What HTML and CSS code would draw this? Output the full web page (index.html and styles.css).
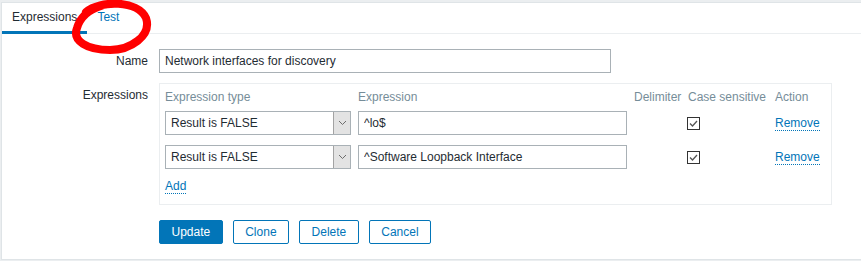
FILE: index.html
```html
<!DOCTYPE html>
<html lang="en">

<head>
    <meta charset="UTF-8">
    <title>Regular expression</title>
    <link rel="stylesheet" href="styles.css">
</head>

<body>

    <div class="panel">
        <div class="tabs">
            <span class="tab active">Expressions</span>
            <span class="tab">Test</span>
        </div>

        <div class="form">
            <div class="form-row">
                <label class="label" for="regexp-name">Name</label>
                <input type="text" id="regexp-name" class="textbox name-box" value="Network interfaces for discovery">
            </div>

            <div class="form-row expressions-row">
                <div class="label">Expressions</div>
                <div class="expr-box">
                    <div class="expr-grid expr-head">
                        <span>Expression type</span>
                        <span>Expression</span>
                        <span>Delimiter</span>
                        <span>Case sensitive</span>
                        <span>Action</span>
                    </div>

                    <div class="expr-grid expr-row">
                        <div class="select">
                            <span class="select-text">Result is FALSE</span>
                            <span class="select-btn">
                                <svg width="9" height="6" viewBox="0 0 9 6"><polyline points="1,1 4.5,4.5 8,1" fill="none" stroke="#6d6d6d" stroke-width="1"/></svg>
                            </span>
                        </div>
                        <input type="text" class="textbox expr-input" value="^lo$">
                        <span></span>
                        <span class="checkbox">
                            <svg width="11" height="11" viewBox="0 0 11 11"><polyline points="2,5.5 4.5,8 9,3" fill="none" stroke="#555" stroke-width="1.3"/></svg>
                        </span>
                        <a class="link" href="#">Remove</a>
                    </div>

                    <div class="expr-grid expr-row">
                        <div class="select">
                            <span class="select-text">Result is FALSE</span>
                            <span class="select-btn">
                                <svg width="9" height="6" viewBox="0 0 9 6"><polyline points="1,1 4.5,4.5 8,1" fill="none" stroke="#6d6d6d" stroke-width="1"/></svg>
                            </span>
                        </div>
                        <input type="text" class="textbox expr-input" value="^Software Loopback Interface">
                        <span></span>
                        <span class="checkbox">
                            <svg width="11" height="11" viewBox="0 0 11 11"><polyline points="2,5.5 4.5,8 9,3" fill="none" stroke="#555" stroke-width="1.3"/></svg>
                        </span>
                        <a class="link" href="#">Remove</a>
                    </div>

                    <div class="add-row">
                        <a class="link" href="#">Add</a>
                    </div>
                </div>
            </div>

            <div class="buttons">
                <button class="btn primary">Update</button>
                <button class="btn">Clone</button>
                <button class="btn">Delete</button>
                <button class="btn">Cancel</button>
            </div>
        </div>
    </div>

    <!-- hand drawn marker round the Test tab -->
    <svg class="marker" width="861" height="60" viewBox="0 0 861 60">
        <path d="M86 12 C100 0, 138 0, 146 18 C152 36, 130 50, 110 50 C87 50, 72 41, 77 28 C80 18, 88 10, 101 6" fill="none" stroke="#ff0000" stroke-width="8" stroke-linecap="round"/>
    </svg>

</body>

</html>
```

FILE: styles.css
```css
* {
    margin: 0;
    padding: 0;
    box-sizing: border-box;
}

body {
    background: #ebeef0;
    font-family: "Liberation Sans", Arial, sans-serif;
    font-size: 12px;
    color: #1f2c33;
    padding: 2px 0 0 1px;
}

.panel {
    background: #fff;
    border: 1px solid #dfe4e7;
    border-right: none;
    height: 258px;
}

.tabs {
    display: flex;
    height: 31px;
    border-bottom: 1px solid #ebeef0;
}

.tab {
    padding: 0 10px;
    line-height: 29px;
    color: #0275b8;
}

.tab.active {
    color: #1f2c33;
    height: 31px;
    border-bottom: 3px solid #0275b8;
}

.form {
    padding-top: 15px;
}

.form-row {
    display: flex;
    align-items: flex-start;
}

.label {
    width: 157px;
    padding-right: 11px;
    text-align: right;
    line-height: 24px;
}

.textbox {
    height: 24px;
    border: 1px solid #a9b1b6;
    padding: 0 5px;
    font-family: "Liberation Sans", Arial, sans-serif;
    font-size: 12px;
    color: #1f2c33;
    background: #fff;
    outline: none;
}

.name-box {
    width: 452px;
}

.expressions-row {
    margin-top: 10px;
}

.expr-box {
    width: 673px;
    border: 1px solid #ebeef0;
    padding: 6px 9px 10px 5px;
}

.expr-grid {
    display: grid;
    grid-template-columns: 193px 276px 54px 87px 1fr;
    align-items: center;
}

.expr-head {
    line-height: 14px;
    color: #768d99;
    margin-bottom: 7px;
}

.expr-row {
    height: 24px;
    margin-bottom: 10px;
}

.select {
    display: flex;
    width: 186px;
    height: 24px;
    border: 1px solid #a9b1b6;
    background: #fff;
}

.select-text {
    flex: 1;
    line-height: 22px;
    padding-left: 5px;
}

.select-btn {
    width: 17px;
    display: flex;
    align-items: center;
    justify-content: center;
    background: #e3e3e3;
    border-left: 1px solid #a3a3a3;
}

.expr-input {
    width: 269px;
}

.checkbox {
    width: 13px;
    height: 13px;
    margin-left: -1px;
    border: 1px solid #333;
    display: flex;
    align-items: center;
    justify-content: center;
}

.link {
    color: #0275b8;
    text-decoration: none;
    border-bottom: 1px dotted #0275b8;
    line-height: 14px;
    justify-self: start;
}

.add-row {
    margin-top: 3px;
}

.add-row .link {
    display: inline-block;
}

.buttons {
    display: flex;
    gap: 10px;
    padding-left: 157px;
    margin-top: 15px;
}

.btn {
    height: 24px;
    padding: 0 11.5px;
    border: 1px solid #0275b8;
    border-radius: 2px;
    background: #fff;
    color: #0275b8;
    font-family: "Liberation Sans", Arial, sans-serif;
    font-size: 12px;
}

.btn.primary {
    background: #0275b8;
    color: #fff;
}

.marker {
    position: absolute;
    left: 0;
    top: 0;
    pointer-events: none;
}
```
